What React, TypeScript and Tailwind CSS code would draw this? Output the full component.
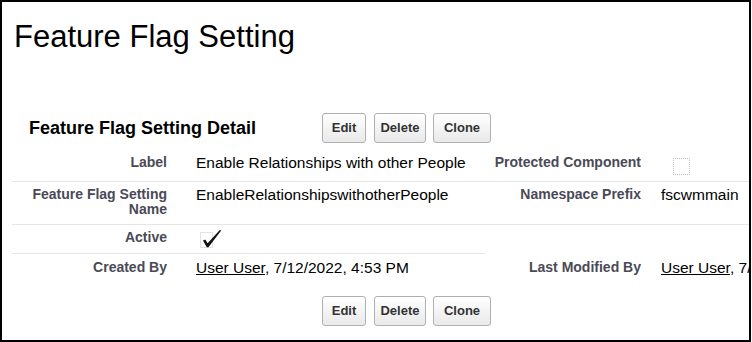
const labelCls =
  "text-right pr-[13px] text-[14px] leading-[15px] font-bold text-[#4a4a56]";
const valueCls = "pl-[16px] text-[15.5px] leading-[17px] text-black whitespace-nowrap";
const value2Cls = "pl-[7px] text-[15.5px] leading-[17px] text-black whitespace-nowrap";
const line = "border-b border-[#e6e6e6]";

function Buttons() {
  return (
    <div className="flex items-center">
      <button className="w-[44px] h-[30px] rounded-[3px] border border-[#b0b0b0] bg-linear-to-b from-white to-[#e9e9e9] text-[13px] font-bold text-[#333]">
        Edit
      </button>
      <button className="ml-[8px] w-[52px] h-[30px] rounded-[3px] border border-[#b0b0b0] bg-linear-to-b from-white to-[#e9e9e9] text-[13px] font-bold text-[#333]">
        Delete
      </button>
      <button className="ml-[7px] w-[58px] h-[30px] rounded-[3px] border border-[#b0b0b0] bg-linear-to-b from-white to-[#e9e9e9] text-[13px] font-bold text-[#333]">
        Clone
      </button>
    </div>
  );
}

function CheckedBox() {
  return (
    <svg width="23" height="20" viewBox="0 0 23 20" className="block">
      <rect x="0.5" y="3.5" width="12" height="15" fill="none" stroke="#c4c4c4" strokeDasharray="1 1" />
      <path d="M3 11.5 L5.2 10.4 L7.6 14.2 L19.6 1.2 L21.4 1.2 L8.4 18.2 L6.8 18.2 Z" fill="#111" />
    </svg>
  );
}

export default function App() {
  return (
    <div className="w-[752px] h-[342px] bg-white font-['Liberation_Sans',Arial,sans-serif]">
      <div className="w-[751px] h-[342px] border-2 border-black overflow-hidden">
        <h1 className="pl-[12px] pt-[17px] text-[31px] leading-[36px] text-black">Feature Flag Setting</h1>

        <div className="mt-[58px] h-[30px] flex items-center">
          <h2 className="pl-[27px] w-[320px] text-[18px] leading-[30px] font-bold text-black">
            Feature Flag Setting Detail
          </h2>
          <Buttons />
        </div>

        <div className="mt-[5px] ml-[10px] w-[780px]">
          <div className="grid grid-cols-[168px_305px_169px_138px] h-[34px]">
            <div className={`${labelCls} pt-[7px] ${line}`}>Label</div>
            <div className={`${valueCls} pt-[6px] ${line}`}>Enable Relationships with other People</div>
            <div className={`${labelCls} pt-[7px] ${line}`}>Protected Component</div>
            <div className={`pl-[19px] pt-[10px] ${line}`}>
              <div className="w-[17px] h-[17px] border border-dotted border-[#c4c4c4]" />
            </div>
          </div>

          <div className="grid grid-cols-[168px_305px_169px_138px] h-[43px]">
            <div className={`${labelCls} pt-[5px] ${line}`}>
              Feature Flag Setting
              <br />
              Name
            </div>
            <div className={`${valueCls} pt-[4px] ${line}`}>EnableRelationshipswithotherPeople</div>
            <div className={`${labelCls} pt-[5px] ${line}`}>Namespace Prefix</div>
            <div className={`${value2Cls} pt-[4px] ${line}`}>fscwmmain</div>
          </div>

          <div className="grid grid-cols-[168px_305px_169px_138px] h-[29px]">
            <div className={`${labelCls} pt-[5px] ${line}`}>Active</div>
            <div className={`pl-[20px] pt-[4px] ${line}`}>
              <CheckedBox />
            </div>
            <div />
            <div />
          </div>

          <div className="grid grid-cols-[168px_305px_169px_138px] h-[30px]">
            <div className={`${labelCls} pt-[6px]`}>Created By</div>
            <div className={`${valueCls} pt-[5px]`}>
              <span className="underline">User User</span>, 7/12/2022, 4:53 PM
            </div>
            <div className={`${labelCls} pt-[6px]`}>Last Modified By</div>
            <div className={`${value2Cls} pt-[5px]`}>
              <span className="underline">User User</span>, 7/12/2022, 4:53 PM
            </div>
          </div>
        </div>

        <div className="mt-[12px] pl-[320px]">
          <Buttons />
        </div>
      </div>
    </div>
  );
}
